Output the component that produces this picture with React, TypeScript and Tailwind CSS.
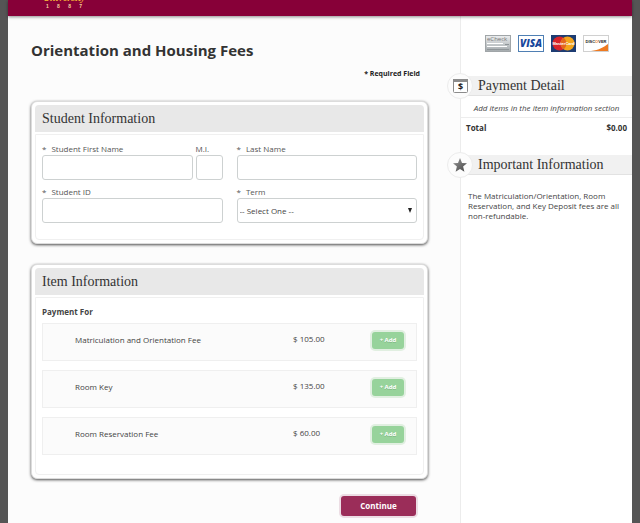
import { useState, type ReactNode } from "react";

const fees = [
  { name: "Matriculation and Orientation Fee", price: "$ 105.00" },
  { name: "Room Key", price: "$ 135.00" },
  { name: "Room Reservation Fee", price: "$ 60.00" },
];

const inputStyle =
  "block h-[25px] w-full rounded-[3px] border border-[#cdd1d1] bg-white px-0.5 text-[8px] text-[#444] outline-none";

function Panel({ title, children }: { title: string; children: ReactNode }) {
  return (
    <section className="rounded-md border border-[#dcdcdc] bg-white p-[3px] shadow-[0_1px_3px_rgba(0,0,0,0.7)]">
      <h2 className="flex h-[27px] items-center rounded-t-sm bg-[#e8e8e8] px-[7px] font-['Liberation_Serif',serif] text-[14px] text-[#333]">
        {title}
      </h2>
      <div className="mt-0.5 rounded-b-sm border border-[#f0f0f0]">{children}</div>
    </section>
  );
}

type FieldProps = {
  id: string;
  label: string;
  required?: boolean;
  className?: string;
  children: ReactNode;
};

function Field({ id, label, required, className = "", children }: FieldProps) {
  return (
    <div className={className}>
      <label htmlFor={id} className="flex h-[13px] gap-[5px] leading-[14px] text-[#555] whitespace-nowrap">
        {required && <span>*</span>}
        {label}
      </label>
      {children}
    </div>
  );
}

function SideHeading({ icon, title }: { icon: ReactNode; title: string }) {
  return (
    <div className="-ml-[14px] flex h-[26px] items-center">
      <span className="z-10 flex size-[26px] shrink-0 items-center justify-center rounded-full border border-[#ececec] bg-[#fcfcfc]">
        {icon}
      </span>
      <h2 className="-ml-2 flex h-5 flex-1 items-center border-b border-[#e2e2e2] bg-[#f1f1f1] pl-[13px] font-['Liberation_Serif',serif] text-[14px] text-[#333] whitespace-nowrap">
        {title}
      </h2>
    </div>
  );
}

function DollarIcon() {
  return (
    <svg width="15" height="14" viewBox="0 0 15 14" aria-hidden="true">
      <rect x="0.5" y="0.5" width="14" height="13" rx="1" fill="#fff" stroke="#8c8c8c" />
      <path d="M0 0h15v3H0z" fill="#8c8c8c" />
      <text x="7.5" y="11" textAnchor="middle" fontSize="9" fontWeight="700" fontFamily="Open Sans, sans-serif" fill="#222">
        $
      </text>
    </svg>
  );
}

function StarIcon() {
  return (
    <svg width="14" height="14" viewBox="0 0 14 14" aria-hidden="true">
      <defs>
        <linearGradient id="star" x1="0" y1="0" x2="1" y2="1">
          <stop offset="0" stopColor="#999" />
          <stop offset="1" stopColor="#444" />
        </linearGradient>
      </defs>
      <path d="M7 0l2 4.900 5 .3-3.900 3.400 1.300 5.100L7 10.900l-4.400 2.800 1.300-5.100L0 5.200l5-.3z" fill="url(#star)" />
    </svg>
  );
}

function CardLogos() {
  return (
    <div className="flex items-center justify-center gap-[7px]">
      <svg width="26" height="17" viewBox="0 0 26 17" role="img" aria-label="eCheck">
        <defs>
          <linearGradient id="check" x1="0" y1="0" x2="0" y2="1">
            <stop offset="0" stopColor="#eceeef" />
            <stop offset="1" stopColor="#a3a9ac" />
          </linearGradient>
        </defs>
        <rect x="0.5" y="0.5" width="25" height="16" fill="url(#check)" stroke="#a0a5a8" />
        <text x="2" y="6" fontSize="6" fontFamily="Open Sans, sans-serif" fill="#777">
          eCheck
        </text>
        <path d="M2 8.500h16M2 11.500h20" stroke="#fff" />
        <path d="M20 9.500h4M2 14.500h22" stroke="#8f9598" />
      </svg>
      <svg width="26" height="17" viewBox="0 0 26 17" role="img" aria-label="Visa">
        <rect x="0.5" y="0.5" width="25" height="16" fill="#fff" stroke="#4f7fb3" />
        <text x="13" y="12" textAnchor="middle" fontSize="10" fontWeight="800" fontStyle="italic" fontFamily="Open Sans, sans-serif" fill="#17479b">
          VISA
        </text>
      </svg>
      <svg width="25" height="17" viewBox="0 0 25 17" role="img" aria-label="MasterCard">
        <path d="M0 0h25v17H0z" fill="#1d3c72" />
        <circle cx="8.500" cy="8.500" r="7" fill="#d8232a" />
        <circle cx="16.500" cy="8.500" r="7" fill="#f4a51c" />
        <path d="M12.500 2.800a7 7 0 0 1 0 11.400a7 7 0 0 1 0-11.400z" fill="#e4661f" />
        <text x="12.500" y="10" textAnchor="middle" fontSize="4" fontWeight="700" fontFamily="Liberation Sans, sans-serif" fill="#fff">
          MasterCard
        </text>
      </svg>
      <svg width="26" height="17" viewBox="0 0 26 17" role="img" aria-label="Discover">
        <rect x="0.5" y="0.5" width="25" height="16" fill="#fff" stroke="#d0d0d0" />
        <path d="M25 9V16H8c8-1 13-4 17-7z" fill="#ee7a21" />
        <text x="13" y="8" textAnchor="middle" fontSize="4" fontWeight="700" fontFamily="Liberation Sans, sans-serif" fill="#222">
          DISC<tspan fill="#ee7a21">O</tspan>VER
        </text>
      </svg>
    </div>
  );
}

export default function App() {
  const [term, setTerm] = useState("");

  return (
    <div className="min-h-screen bg-[#555] px-2 font-['Open_Sans',sans-serif] text-[8px] text-[#444]">
      <div className="flex min-h-screen flex-col bg-[#fcfcfc]">
        <header className="z-10 flex h-4 flex-col justify-end overflow-hidden bg-[#870038] pb-[7px] pl-[34px] shadow-[0_1px_3px_rgba(0,0,0,0.45)]">
          <div className="w-[44px] text-center text-[#f5b335]">
            <p className="font-['Liberation_Serif',serif] text-[10px] leading-[10px] font-bold italic">University</p>
            <p className="flex justify-between px-1 font-['Liberation_Sans',sans-serif] text-[5px] leading-[6px] font-bold text-[#f7cf9a]">
              <span>1</span>
              <span>8</span>
              <span>8</span>
              <span>7</span>
            </p>
          </div>
        </header>

        <div className="flex flex-1">
          <main className="min-w-0 flex-1 pt-6 pr-8 pb-2 pl-[23px]">
            <h1 className="text-[15px] leading-5 font-bold text-[#333]">Orientation and Housing Fees</h1>
            <p className="mt-2 mb-[21px] pr-2 text-right text-[7px] leading-3 font-bold text-[#222]">* Required Field</p>

            <Panel title="Student Information">
              <form className="grid grid-cols-2 gap-x-[14px] gap-y-[5px] px-[6px] pt-[7px] pb-4">
                <div className="flex gap-[3px]">
                  <Field id="first" label="Student First Name" required className="flex-1">
                    <input id="first" type="text" className={inputStyle} />
                  </Field>
                  <Field id="mi" label="M.I." className="w-[27px]">
                    <input id="mi" type="text" className={inputStyle} />
                  </Field>
                </div>
                <Field id="last" label="Last Name" required>
                  <input id="last" type="text" className={inputStyle} />
                </Field>
                <Field id="student-id" label="Student ID" required>
                  <input id="student-id" type="text" className={inputStyle} />
                </Field>
                <Field id="term" label="Term" required>
                  <div className="relative">
                    <select
                      id="term"
                      value={term}
                      onChange={(e) => setTerm(e.target.value)}
                      className={`${inputStyle} appearance-none`}
                    >
                      <option value="">-- Select One --</option>
                      <option value="fall">Fall</option>
                      <option value="spring">Spring</option>
                    </select>
                    <svg className="pointer-events-none absolute top-[10px] right-[5px]" width="4" height="5" viewBox="0 0 4 5">
                      <path d="M0 0h4L2 5z" fill="#222" />
                    </svg>
                  </div>
                </Field>
              </form>
            </Panel>

            <div className="mt-5">
              <Panel title="Item Information">
                <div className="px-[6px] pt-2 pb-[19px]">
                  <h3 className="mb-[5px] leading-3 font-bold">Payment For</h3>
                  <ul className="space-y-[9px]">
                    {fees.map((fee) => (
                      <li
                        key={fee.name}
                        className="flex h-[38px] items-center border border-[#efefef] bg-[#fbfbfb] pr-3 pb-1 pl-8"
                      >
                        <span className="flex-1">{fee.name}</span>
                        <span className="w-[79px] pb-0.5">{fee.price}</span>
                        <button
                          type="button"
                          className="h-[17px] w-[32px] rounded-[3px] bg-[#97d39b] text-[6px] font-bold text-white ring-2 ring-[#e1efe1] text-shadow-2xs"
                        >
                          + Add
                        </button>
                      </li>
                    ))}
                  </ul>
                </div>
              </Panel>
            </div>

            <div className="mt-[17px] flex justify-end pr-3">
              <button
                type="button"
                className="h-5 w-[75px] rounded-[3px] bg-[#9b2d59] text-[8px] font-bold text-white ring-2 ring-[#ecdde4]"
              >
                Continue
              </button>
            </div>
          </main>

          <aside className="w-[172px] shrink-0 border-l border-[#ececec] bg-white pt-[19px]">
            <CardLogos />
            <div className="mt-[21px]">
              <SideHeading icon={<DollarIcon />} title="Payment Detail" />
            </div>
            <p className="mt-[3px] border-b border-[#ededed] pb-[3px] text-center leading-3 italic">
              Add items in the item information section
            </p>
            <dl className="flex justify-between px-[5px] pt-1 leading-3 font-bold text-[#333]">
              <dt>Total</dt>
              <dd>$0.00</dd>
            </dl>
            <div className="mt-[18px]">
              <SideHeading icon={<StarIcon />} title="Important Information" />
            </div>
            <p className="mt-[13px] pr-3 pl-[7px] leading-[10px]">
              The Matriculation/Orientation, Room Reservation, and Key Deposit fees are all non-refundable.
            </p>
          </aside>
        </div>
      </div>
    </div>
  );
}
